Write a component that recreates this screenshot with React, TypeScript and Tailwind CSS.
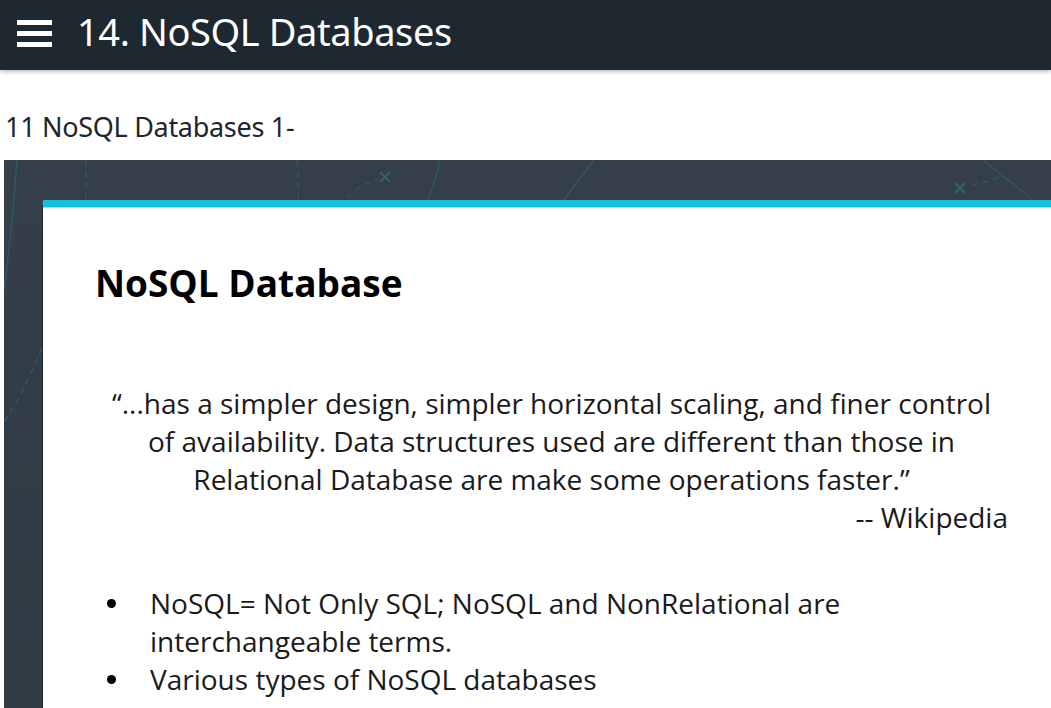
import React from "react"

const quoteLines = [
  "“...has a simpler design, simpler horizontal scaling, and finer control",
  "of availability. Data structures used are different than those in",
  "Relational Database are make some operations faster.”",
]

const bullets = [
  ["NoSQL= Not Only SQL; NoSQL and NonRelational are", "interchangeable terms."],
  ["Various types of NoSQL databases"],
]

function Hamburger() {
  return (
    <div className="flex flex-col gap-[6px] w-[35px]">
      <span className="block h-[5px] bg-white" />
      <span className="block h-[5px] bg-white" />
      <span className="block h-[5px] bg-white" />
    </div>
  )
}

function SlideDecor() {
  return (
    <svg className="absolute inset-0 h-full w-full pointer-events-none" fill="none">
      <g stroke="#2c5866" strokeWidth="1.5">
        <path d="M13 0 Q 9 60 0 130" />
        <path d="M436 0 Q 432 20 424 40" />
        <path d="M590 0 Q 574 20 560 40" />
        <path d="M979 0 L 1029 40" />
      </g>
      <g stroke="#2c5866" strokeWidth="1.5" strokeDasharray="6 5">
        <path d="M82 0 L 82 40" />
        <path d="M293 0 Q 295 20 294 40" />
        <path d="M343 38 Q 356 24 373 20" />
        <path d="M968 25 Q 985 22 999 15" />
        <path d="M38 188 Q 22 228 0 262" />
      </g>
      <g stroke="#2f6372" strokeWidth="2">
        <path d="M376 12 L 386 22 M386 12 L 376 22" />
        <path d="M951 23 L 961 33 M961 23 L 951 33" />
      </g>
    </svg>
  )
}

export default function App() {
  return (
    <div className="w-[1051px] h-[708px] overflow-hidden bg-white">
      <header className="h-[70px] bg-[#1e2831] flex items-center shadow-[0_2px_4px_rgba(0,0,0,0.25)] relative z-10">
        <div className="ml-[17px] -mt-[4px]">
          <Hamburger />
        </div>
        <h1
          className="ml-[25px] text-white text-[38px] leading-none tracking-[-0.4px] -mt-[8px]"
          style={{ fontFamily: '"Noto Sans", "Open Sans", sans-serif' }}
        >
          14. NoSQL Databases
        </h1>
      </header>

      <div className="pl-[4px]">
        <p
          className="pt-[37px] pl-[1px] h-[90px] text-[#212529] text-[27px] leading-[40px] tracking-[-0.3px]"
          style={{ fontFamily: '"Noto Sans", "Open Sans", sans-serif' }}
        >
          11 NoSQL Databases 1-
        </p>

        <div className="relative w-[1100px] h-[560px] bg-gradient-to-b from-[#343f49] to-[#2f3a43] pt-[40px] pl-[38px]">
          <SlideDecor />
          <div
            className="relative w-[1100px] h-[520px] bg-white border-t-[7px] border-[#16c1dc] rounded-tl-[3px] border-l border-l-[#1d262e] pl-[52px] text-[#111]"
            style={{ fontFamily: '"Open Sans", sans-serif' }}
          >
            <div className="h-px bg-[#9fe3ef] -ml-[52px]" />
            <h2 className="pt-[52px] text-[37px] leading-[46px] font-bold text-black">NoSQL Database</h2>

            <div className="mt-[78px] w-[913px] text-[28px] leading-[38px] text-[#1a1a1a]">
              {quoteLines.map((l) => (
                <div key={l} className="text-center">{l}</div>
              ))}
              <div className="text-right">-- Wikipedia</div>
            </div>

            <ul className="mt-[48px] text-[28px] leading-[38px] text-[#1a1a1a]">
              {bullets.map((b) => (
                <li key={b[0]} className="flex">
                  <span className="w-[55px] flex pt-[15px] pl-[12px]">
                    <span className="block w-[9px] h-[9px] rounded-full bg-black" />
                  </span>
                  <div>
                    {b.map((t) => (
                      <div key={t}>{t}</div>
                    ))}
                  </div>
                </li>
              ))}
            </ul>
          </div>
        </div>
      </div>
    </div>
  )
}
